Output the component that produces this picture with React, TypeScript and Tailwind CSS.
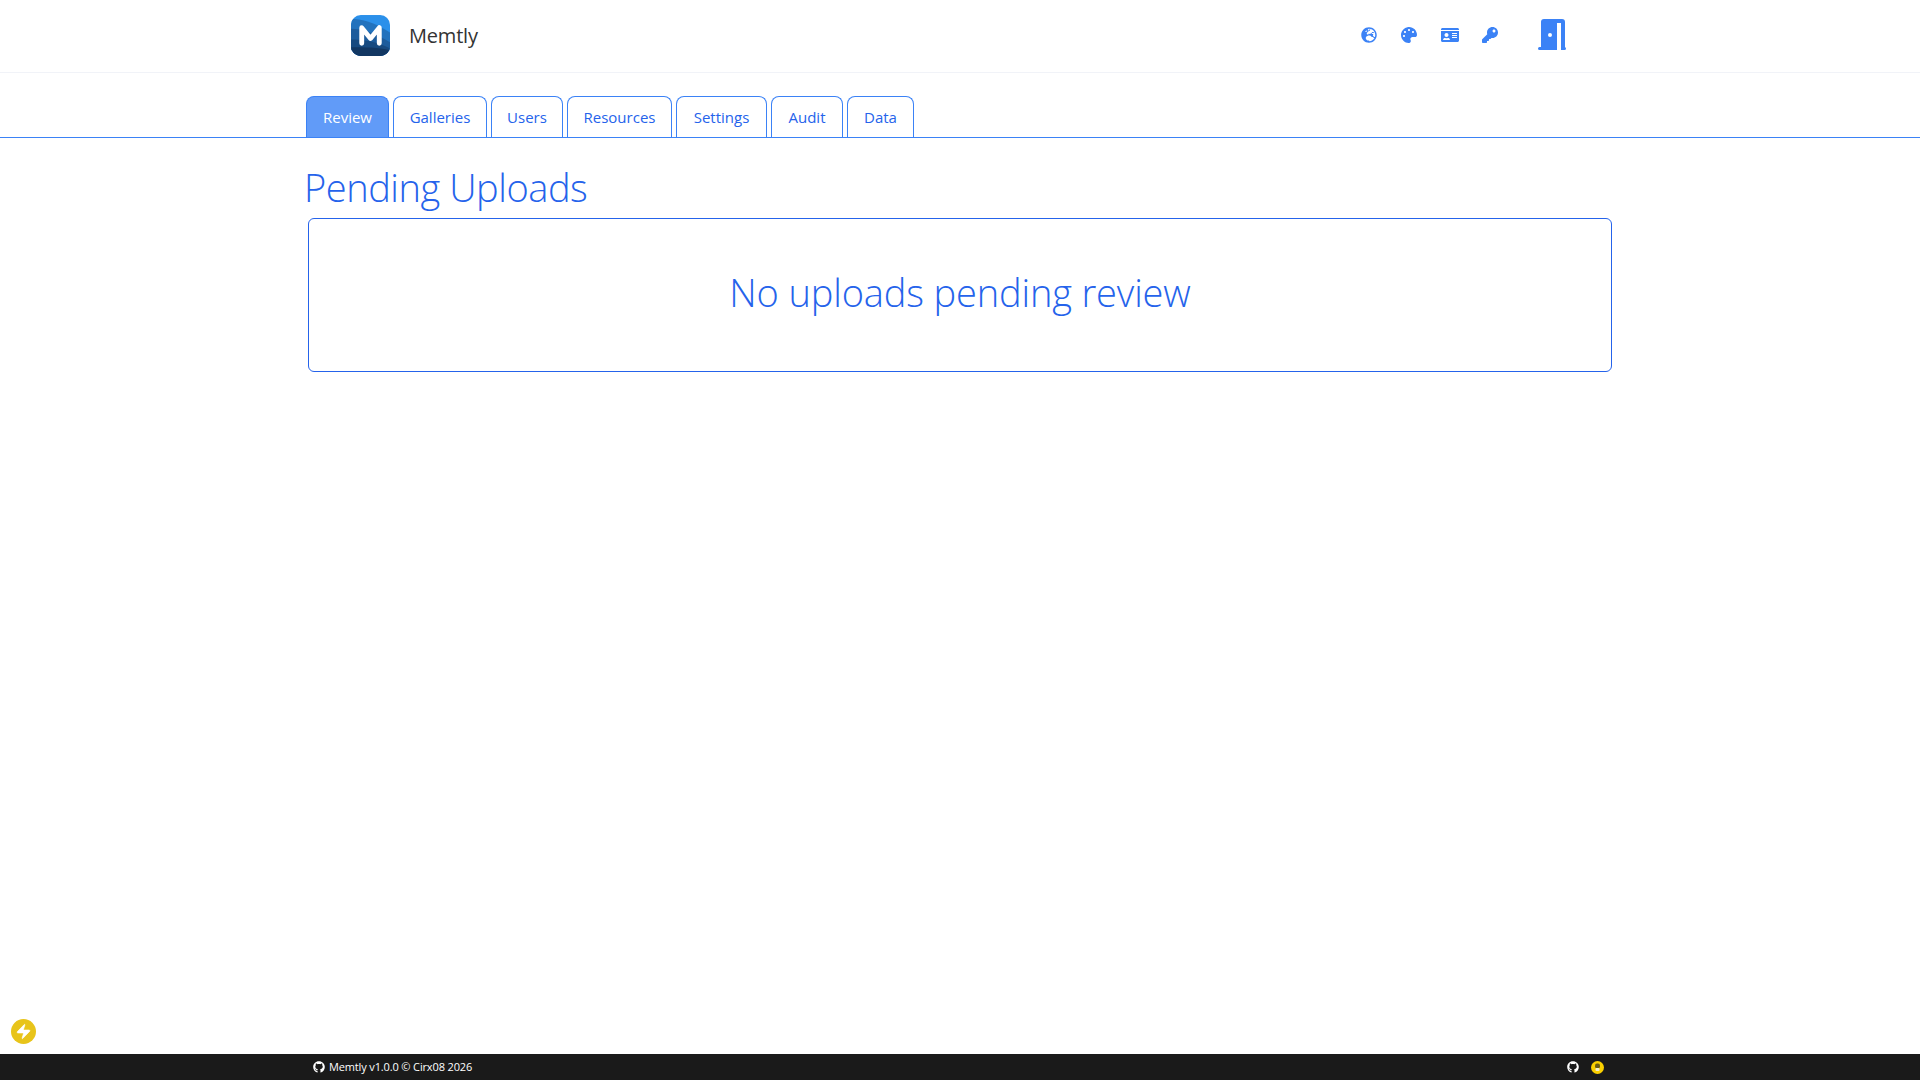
import { FaGithub, FaGlobeEurope, FaPalette, FaIdCard, FaKey } from "react-icons/fa";
import { Zap } from "lucide-react";

const tabs = [
  { name: "Review", w: "w-[83px]" },
  { name: "Galleries", w: "w-[94px]" },
  { name: "Users", w: "w-[72px]" },
  { name: "Resources", w: "w-[105px]" },
  { name: "Settings", w: "w-[91px]" },
  { name: "Audit", w: "w-[72px]" },
  { name: "Data", w: "w-[67px]" },
];

function Logo() {
  return (
    <svg viewBox="0 0 40 42" className="h-[41px] w-[39px] -translate-y-[1px]">
      <defs>
        <clipPath id="logo-clip">
          <rect width="40" height="42" rx="10" />
        </clipPath>
      </defs>
      <g clipPath="url(#logo-clip)">
        <rect width="40" height="42" fill="#2b90ea" />
        <path d="M0 4c10 0 22 2 40 14v24H0z" fill="#2272bd" />
        <path d="M0 14c12 0 24 4 40 14v14H0z" fill="#1d5c9c" />
        <path d="M0 25c12 0 26 2 40 9v8H0z" fill="#174a80" />
        <path d="M0 33c14 0 28 0 40 3v6H0z" fill="#123762" />
      </g>
      <path
        d="M11 29V13l9 11 9-11v16"
        fill="none"
        stroke="#fff"
        strokeWidth="5"
        strokeLinecap="round"
        strokeLinejoin="round"
      />
    </svg>
  );
}

function DoorIcon() {
  return (
    <svg viewBox="0 0 28 32" className="h-[32px] w-[28px]" fill="currentColor">
      <path
        fillRule="evenodd"
        d="M3 3a3 3 0 0 1 3-3h18a3 3 0 0 1 3 3v26h-4V4h-4v27H1.500a1.500 1.500 0 0 1 0-3H3zm11 13a2 2 0 1 0-4 0a2 2 0 1 0 4 0z"
      />
      <path d="M23 28h3.500a1.500 1.500 0 0 1 0 3H23z" />
    </svg>
  );
}

function BulbIcon() {
  return (
    <svg viewBox="0 0 13 13" className="size-[13px]">
      <circle cx="6.500" cy="6.500" r="6.500" fill="#fad000" />
      <rect x="4" y="2.500" width="5" height="5" rx="2" fill="#6b5c14" />
      <rect x="4.500" y="7" width="4" height="3" rx="1" fill="#f4f0d0" />
    </svg>
  );
}

export default function App() {
  return (
    <div className="flex h-[1080px] flex-col bg-white font-['Open_Sans',sans-serif]">
      <header className="flex h-[73px] shrink-0 items-center border-b border-[#f1f3f8] pl-[351px]">
        <Logo />
        <span className="ml-[19px] text-[20px] tracking-[-0.2px] text-[#333333]">Memtly</span>
        <div className="ml-[883px] flex -translate-y-[1px] items-center text-[#3b82f6]">
          <FaGlobeEurope className="size-[16px]" />
          <FaPalette className="ml-[24px] size-[16px]" />
          <FaIdCard className="ml-[24px] size-[18px]" />
          <FaKey className="ml-[23px] size-[16px]" />
          <span className="ml-[40px]">
            <DoorIcon />
          </span>
        </div>
      </header>

      <nav className="mt-[23px] flex h-[42px] shrink-0 gap-1 border-b border-[#3b82f6] pl-[306px]">
        {tabs.map((t, i) => (
          <a
            key={t.name}
            className={`flex h-[41px] items-center justify-center rounded-t-lg border border-b-0 border-[#3b82f6] text-[15px] ${t.w} ${
              i === 0 ? "bg-[#619bf8] text-white" : "text-[#2563eb]"
            }`}
          >
            {t.name}
          </a>
        ))}
      </nav>

      <main className="flex-1 pl-[304px]">
        <h1 className="mt-[25px] text-[38px] font-light leading-[48px] tracking-[-0.45px] text-[#2563eb]">
          Pending Uploads
        </h1>
        <div className="ml-[4px] mt-[7px] flex h-[154px] w-[1304px] items-center justify-center rounded-md border border-[#2563eb] pb-[6px]">
          <h2 className="text-[38px] font-light tracking-[-0.15px] text-[#2563eb]">
            No uploads pending review
          </h2>
        </div>
      </main>

      <button className="absolute left-[11px] top-[1019px] flex size-[25px] items-center justify-center rounded-full bg-[#e8c41a] text-white">
        <Zap className="size-[17px]" fill="currentColor" strokeWidth={1} />
      </button>

      <footer className="flex h-[26px] shrink-0 items-center bg-[#1a1a1a] pl-[313px] text-[11px] tracking-[-0.14px] text-white">
        <FaGithub className="size-[12px]" />
        <span className="ml-[4px]">Memtly v1.0.0 © Cirx08 2026</span>
        <span className="ml-auto mr-[316px] flex items-center gap-[12px]">
          <FaGithub className="size-[12px]" />
          <BulbIcon />
        </span>
      </footer>
    </div>
  );
}
